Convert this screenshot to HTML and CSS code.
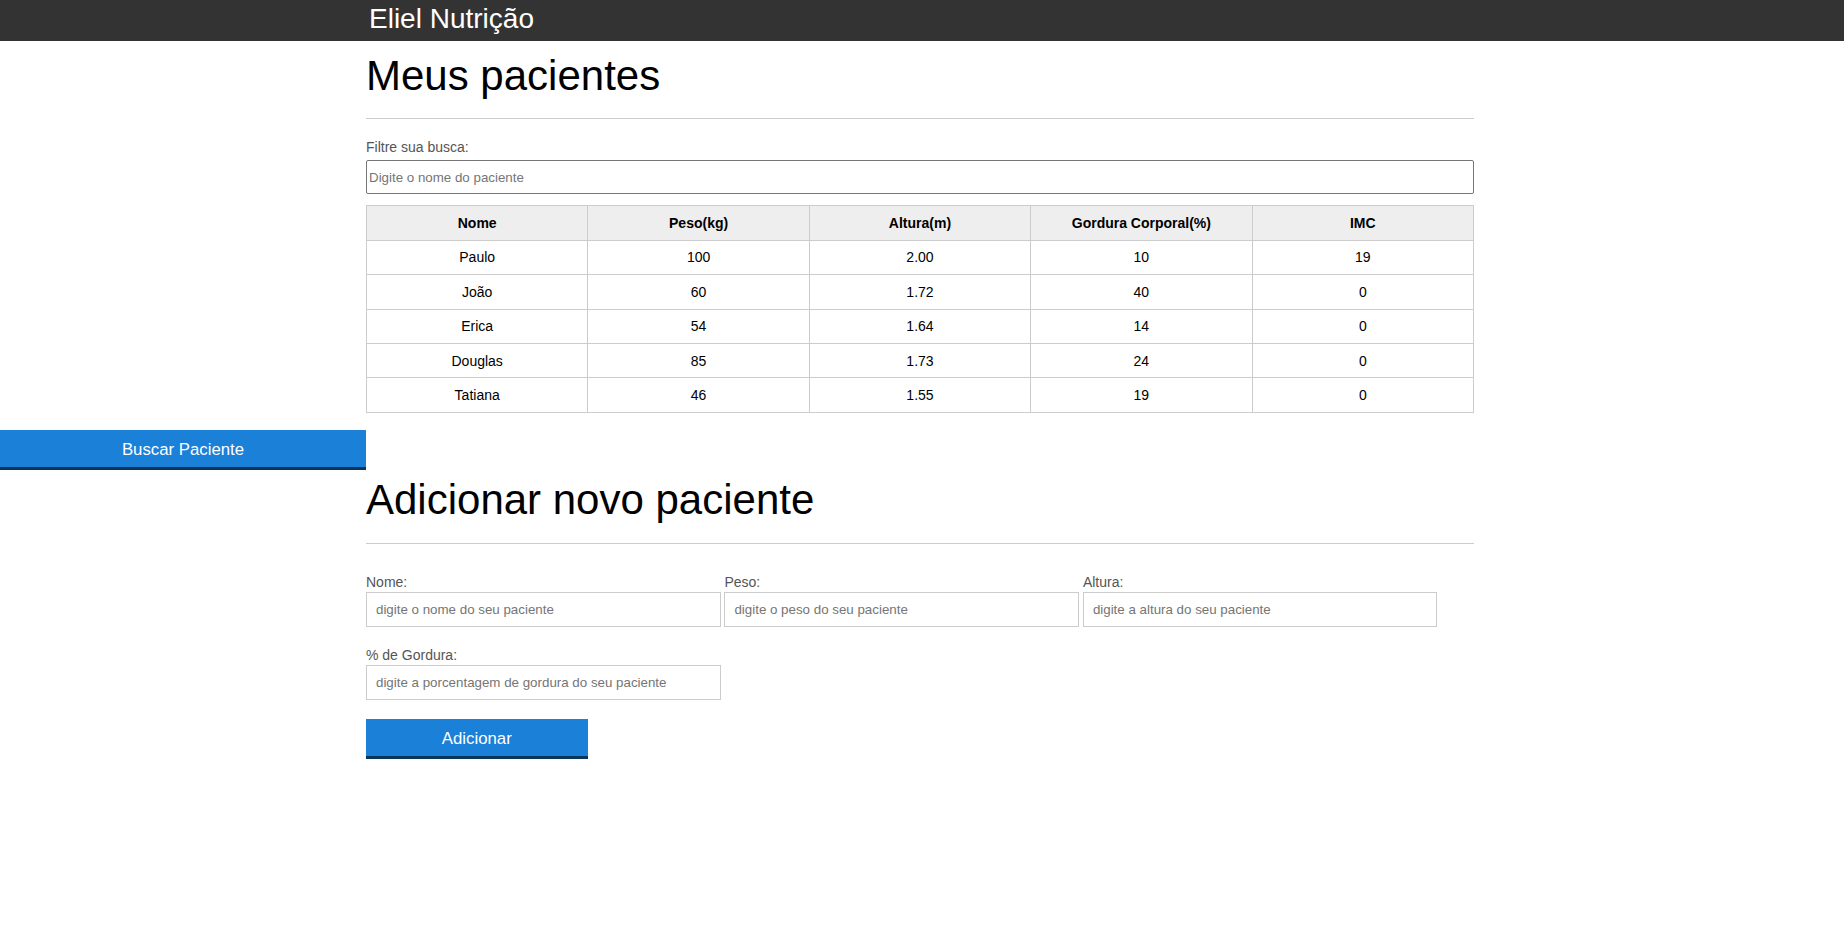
FILE: index.html
```html
<!DOCTYPE html>
<html lang="pt-BR">
<head>
<meta charset="utf-8">
<title>Eliel Nutrição</title>
<link rel="stylesheet" href="styles.css">
</head>
<body>
<header class="topbar">
  <h2 class="brand">Eliel Nutrição</h2>
</header>
<main class="page">
  <section class="section list-section">
    <h1 class="title">Meus pacientes</h1>
    <label class="filter-label" for="filtrar">Filtre sua busca:</label>
    <input class="filter-input" id="filtrar" type="text" placeholder="Digite o nome do paciente">
    <table class="patients">
      <thead>
        <tr><th>Nome</th><th>Peso(kg)</th><th>Altura(m)</th><th>Gordura Corporal(%)</th><th>IMC</th></tr>
      </thead>
      <tbody>
        <tr><td>Paulo</td><td>100</td><td>2.00</td><td>10</td><td>19</td></tr>
        <tr><td>João</td><td>60</td><td>1.72</td><td>40</td><td>0</td></tr>
        <tr><td>Erica</td><td>54</td><td>1.64</td><td>14</td><td>0</td></tr>
        <tr><td>Douglas</td><td>85</td><td>1.73</td><td>24</td><td>0</td></tr>
        <tr><td>Tatiana</td><td>46</td><td>1.55</td><td>19</td><td>0</td></tr>
      </tbody>
    </table>
  </section>
  <button class="btn search-btn" type="button">Buscar Paciente</button>
  <section class="section add-section">
    <h1 class="title title-add">Adicionar novo paciente</h1>
    <form class="add-form">
      <div class="fields">
        <div class="field">
          <label for="nome">Nome:</label>
          <input id="nome" type="text" placeholder="digite o nome do seu paciente">
        </div>
        <div class="field">
          <label for="peso">Peso:</label>
          <input id="peso" type="text" placeholder="digite o peso do seu paciente">
        </div>
        <div class="field">
          <label for="altura">Altura:</label>
          <input id="altura" type="text" placeholder="digite a altura do seu paciente">
        </div>
        <div class="field">
          <label for="gordura">% de Gordura:</label>
          <input id="gordura" type="text" placeholder="digite a porcentagem de gordura do seu paciente">
        </div>
      </div>
      <button class="btn add-btn" type="button">Adicionar</button>
    </form>
  </section>
</main>
</body>
</html>
```
FILE: styles.css
```css
* {
  box-sizing: border-box;
}

html, body {
  margin: 0;
  padding: 0;
  background: #fff;
}

body {
  font-family: "Liberation Sans", Arial, sans-serif;
  font-size: 14px;
  color: #000;
}

.topbar {
  background: #333;
  height: 41px;
  display: grid;
  grid-template-columns: 366px 1108px 1fr;
}

.brand {
  grid-column: 2;
  margin: 0;
  padding: 3px 0 0 3px;
  font-size: 28px;
  font-weight: normal;
  color: #fff;
  line-height: 31px;
}

.page {
  display: grid;
  grid-template-columns: 366px 1108px 1fr;
}

.section {
  grid-column: 2;
}

.list-section {
  grid-row: 1;
}

.search-btn {
  grid-column: 1;
  grid-row: 2;
}

.add-section {
  grid-row: 3;
}

.title {
  margin: 11px 0 0;
  padding-bottom: 17.7px;
  border-bottom: 1px solid #ccc;
  font-size: 42px;
  font-weight: normal;
  line-height: 48.3px;
}

.title-add {
  margin-top: 5.6px;
  padding-bottom: 19px;
}

.filter-label {
  display: block;
  margin-top: 20px;
  margin-bottom: 5.4px;
  color: #555;
  line-height: 16px;
}

.filter-input {
  display: block;
  width: 100%;
  height: 34px;
  border: 1px solid #767676;
  border-radius: 2px;
  padding: 1px 2px;
  font-family: "Liberation Sans", Arial, sans-serif;
  font-size: 13.333px;
  color: #000;
}

.filter-input::placeholder,
.field input::placeholder {
  color: #757575;
}

.patients {
  width: 100%;
  margin-top: 11px;
  border-collapse: collapse;
  table-layout: fixed;
  border: 1px solid #ccc;
}

.patients th,
.patients td {
  border: 1px solid #ccc;
  padding: 8.7px 4px;
  line-height: 16px;
  text-align: center;
  font-size: 14px;
}

.patients th {
  background: #eee;
  font-weight: bold;
}

.btn {
  display: block;
  height: 40px;
  padding: 2.5px 0 0;
  border: none;
  border-bottom: 3px solid #06365c;
  border-radius: 0;
  background: #1b80d8;
  color: #fff;
  font-family: "Liberation Sans", Arial, sans-serif;
  font-size: 16.8px;
  line-height: 19px;
  text-align: center;
  cursor: pointer;
}

.search-btn {
  width: 100%;
  margin-top: 17.5px;
}

.add-form {
  margin-top: 30px;
}

.fields {
  display: flex;
  flex-wrap: wrap;
  column-gap: 3.9px;
  row-gap: 20px;
}

.field {
  width: 32%;
}

.field label {
  display: block;
  color: #555;
  line-height: 16px;
  margin-bottom: 2px;
}

.field input {
  display: block;
  width: 100%;
  height: 35px;
  border: 1px solid #ccc;
  border-radius: 0;
  padding: 0 9px;
  font-family: "Liberation Sans", Arial, sans-serif;
  font-size: 13.333px;
  color: #000;
}

.add-btn {
  width: 20%;
  margin-top: 18.7px;
}
```
